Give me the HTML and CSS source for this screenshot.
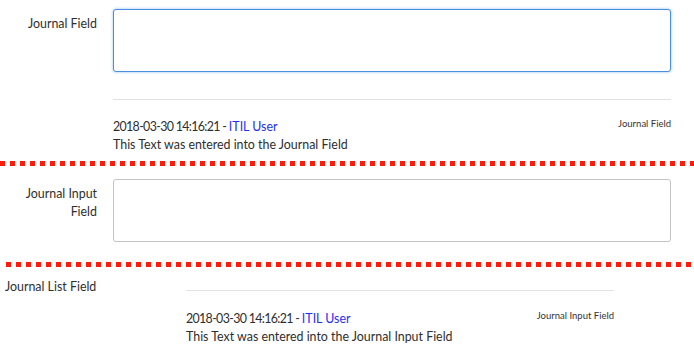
FILE: index.html
```html
<!DOCTYPE html>
<html>
<head>
<meta charset="utf-8">
<link rel="stylesheet" href="styles.css">
</head>
<body>
<div class="form-row row-first">
  <label class="field-label">Journal Field</label>
  <div class="field-body">
    <div class="textarea focused"></div>
  </div>
</div>
<div class="journal journal-first">
  <div class="entry">
    <div class="entry-head">
      <span class="meta"><span class="stamp">2018-03-30 14:16:21 - </span><a class="user">ITIL User</a></span>
      <span class="field-name">Journal Field</span>
    </div>
    <div class="entry-text">This Text was entered into the Journal Field</div>
  </div>
</div>
<div class="dots dots-first"></div>
<div class="form-row row-second">
  <label class="field-label">Journal Input<br>Field</label>
  <div class="field-body">
    <div class="textarea"></div>
  </div>
</div>
<div class="dots dots-second"></div>
<div class="list-row">
  <div class="list-label">Journal List Field</div>
  <div class="journal journal-list">
    <div class="entry">
      <div class="entry-head">
        <span class="meta"><span class="stamp">2018-03-30 14:16:21 - </span><a class="user">ITIL User</a></span>
        <span class="field-name">Journal Input Field</span>
      </div>
      <div class="entry-text">This Text was entered into the Journal Input Field</div>
    </div>
  </div>
</div>
</body>
</html>
```
FILE: styles.css
```css
* { box-sizing: border-box; }
html, body { margin: 0; padding: 0; background: #fff; }
body {
  font-family: "Lato", "Liberation Sans", sans-serif;
  font-size: 12.4px;
  color: #2e2e2e;
  line-height: 18px;
}
.form-row {
  display: grid;
  grid-template-columns: 113px 558px;
}
.row-first { padding-top: 9px; }
.row-second { padding-top: 13px; }
.field-label {
  text-align: right;
  padding-right: 16px;
  padding-top: 6px;
}
.textarea {
  height: 63px;
  border: 1px solid #c4c4c4;
  border-radius: 3px;
  background: #fff;
}
.textarea.focused {
  border-color: #4a90e2;
  box-shadow: 0 0 3px rgba(74,144,226,0.6);
}
.journal-first {
  margin-left: 113px;
  width: 558px;
  margin-top: 27px;
}
.journal {
  border-top: 1px solid #e3e3e3;
}
.entry { padding-top: 18px; }
.entry-head {
  display: flex;
  justify-content: space-between;
  align-items: flex-start;
}
.stamp { letter-spacing: -0.65px; }
.user { color: #1f2ef0; text-decoration: none; }
.field-name {
  font-size: 9.5px;
  line-height: 12px;
  color: #333;
}
.entry-text { color: #2e2e2e; }
.dots {
  height: 5px;
  background-image: linear-gradient(to right, #ff1a0a 0 5px, transparent 5px 10px);
  background-size: 10px 5px;
  background-repeat: repeat-x;
}
.dots-first { margin-top: 7px; }
.dots-second { margin-top: 20px; margin-left: 6px; }
.list-row {
  display: grid;
  grid-template-columns: 186px 428px;
  padding-top: 11px;
}
.list-label { padding-left: 5px; }
.journal-list { margin-top: 12px; }
.journal-list .entry { padding-top: 19px; }
```
